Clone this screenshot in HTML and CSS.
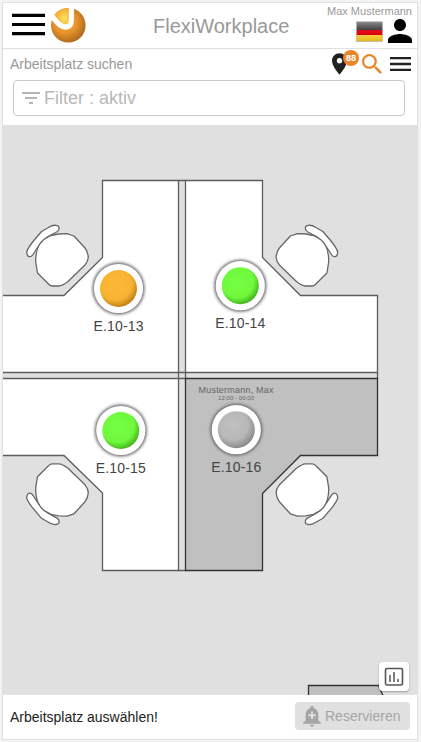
FILE: index.html
```html
<!DOCTYPE html>
<html lang="de">
<head>
<meta charset="utf-8">
<title>FlexiWorkplace</title>
<link rel="stylesheet" href="styles.css">
</head>
<body>
<div class="app">
  <header class="topbar">
    <svg class="menu" width="33" height="24" viewBox="0 0 33 24"><path d="M0 2.400h33M0 11.500h33M0 20.600h33" stroke="#000" stroke-width="3.200"/></svg>
    <svg class="logo" width="36" height="36" viewBox="0 0 36 36">
      <defs>
        <radialGradient id="ball" cx=".42" cy=".4" r=".65"><stop offset="0" stop-color="#f9a63c"/><stop offset=".5" stop-color="#e8932d"/><stop offset="1" stop-color="#a8641c"/></radialGradient>
        <radialGradient id="core" cx=".7" cy=".65" r=".7"><stop offset="0" stop-color="#ffe25a"/><stop offset="1" stop-color="#f3a62c"/></radialGradient>
      </defs>
      <circle cx="18.300" cy="18.300" r="17.300" fill="url(#ball)"/>
      <path d="M1.500 7.500C6 15 11 20 15.500 20Q21.200 20 21.200 13V0" fill="none" stroke="#fff" stroke-width="5.400"/>
      <path d="M4.300 7.500Q10 1.500 18.500 1V13.500Q18.500 17.300 15.500 17.300Q10.500 16.500 4.300 7.500Z" fill="url(#core)"/>
    </svg>
    <h1 class="title">FlexiWorkplace</h1>
    <div class="account">
      <span class="username">Max Mustermann</span>
      <div class="account-icons">
        <svg width="27" height="21" viewBox="0 0 27 21">
          <defs><linearGradient id="flag" x2="0" y2="1"><stop stop-color="#8a8a8a"/><stop offset=".4" stop-color="#444"/><stop offset=".4" stop-color="#d81420"/><stop offset=".5" stop-color="#e50b18"/><stop offset=".68" stop-color="#d40000"/><stop offset=".68" stop-color="#f5cf3c"/><stop offset="1" stop-color="#e3b91b"/></linearGradient></defs>
          <rect x=".5" y=".8" width="26" height="19.600" fill="url(#flag)" stroke="#aaa" stroke-width=".6"/>
        </svg>
        <svg width="24" height="24" viewBox="4 4 16 16"><path d="M12 12c2.210 0 4-1.790 4-4s-1.790-4-4-4-4 1.790-4 4 1.790 4 4 4zm0 2c-2.670 0-8 1.340-8 4v2h16v-2c0-2.660-5.330-4-8-4z"/></svg>
      </div>
    </div>
  </header>
  <section class="search">
    <div class="search-row">
      <span class="search-label">Arbeitsplatz suchen</span>
      <div class="pin">
        <svg width="15" height="22" viewBox="5 2 14 20"><path fill="#222" d="M12 2C8.130 2 5 5.130 5 9c0 5.250 7 13 7 13s7-7.750 7-13c0-3.870-3.130-7-7-7zm0 9.500a2.500 2.500 0 010-5 2.500 2.500 0 010 5z"/></svg>
        <span class="badge">88</span>
      </div>
      <svg class="glass" width="20" height="20" viewBox="3 3 17.500 17.500"><path fill="#e8862c" d="M15.500 14h-.79l-.28-.27A6.471 6.471 0 0016 9.500 6.500 6.500 0 109.500 16c1.610 0 3.090-.59 4.230-1.570l.27.28v.79l5 4.990L20.490 19l-4.990-5zm-6 0C7.010 14 5 11.990 5 9.500S7.010 5 9.500 5 14 7.010 14 9.500 11.990 14 9.500 14z"/></svg>
      <svg class="list" width="21" height="16" viewBox="0 0 21 16"><path d="M0 2.200h21M0 8h21M0 13.900h21" stroke="#222" stroke-width="2.300"/></svg>
    </div>
    <div class="filter">
      <svg width="18" height="12" viewBox="3 6 18 12"><path fill="#b5b5b5" d="M10 18h4v-2h-4v2zM3 6v2h18V6H3zm3 7h12v-2H6v2z"/></svg>
      <span>Filter : aktiv</span>
    </div>
  </section>
  <main class="map">
    <svg class="plan" width="414" height="570" viewBox="3 125 414 570">
      <defs>
        <radialGradient id="orange" cx=".42" cy=".38" r=".65"><stop offset="0" stop-color="#fcb935"/><stop offset=".68" stop-color="#f7b231"/><stop offset="1" stop-color="#b97b12"/></radialGradient>
        <radialGradient id="green" cx=".42" cy=".38" r=".65"><stop offset="0" stop-color="#75ff42"/><stop offset=".68" stop-color="#6ff83c"/><stop offset="1" stop-color="#3fae18"/></radialGradient>
        <radialGradient id="grey" cx=".42" cy=".38" r=".65"><stop offset="0" stop-color="#c0c0c0"/><stop offset=".6" stop-color="#b8b8b8"/><stop offset="1" stop-color="#858585"/></radialGradient>
        <filter id="glow" x="-30%" y="-30%" width="160%" height="160%"><feGaussianBlur stdDeviation="1.500"/></filter>
        <g id="ring"><circle r="26" fill="#6a6670" filter="url(#glow)"/><circle r="24.600" fill="#fff"/></g>
        <g id="chair" fill="#fff" stroke="#666" stroke-width="1.300" stroke-linejoin="round">
          <path d="M43.500 239.500L51 235.500L58.500 234L67 233.700L74 236L85 248Q88 252 88.300 257Q88.300 261 85 265L68 281.500Q62 286 59 286L52 286Q50 286 48 283.500L37.500 273L35.700 262Q35.500 251 39.500 244Q41 241 43.500 239.500Z"/>
          <path d="M26.700 252Q27 256.500 29.500 256.700Q31.500 256.800 33 254.500L40.500 243Q43 239.500 48 236.500L57 231.700Q59.500 230 59 227.500Q58.800 225.500 56 225.300Q52 225 48.500 227.500L41.500 231.500L33 241.500Q27.500 248.500 26.700 252Z"/>
        </g>
      </defs>
      <g fill="#fff" stroke="#5c5c5c" stroke-width="1.300">
        <path d="M0 295.500H64L102.500 257.500V180.500H178.500V372.500H0Z"/>
        <path d="M185.500 180.500H262.500V257.500L300.500 295.500H377.500V372.500H185.500Z"/>
        <path d="M0 378.500H178.500V570.500H102.500V493L64 455.500H0Z"/>
        <path fill="none" d="M178.500 180.500H185.500M178.500 372.500H185.500V378.500M178.500 372.500V378.500H185.500M178.500 570.500H185.500M377.500 372.500V378.500"/>
      </g>
      <g fill="#c0c0c0" stroke="#333" stroke-width="1.300">
        <path d="M185.500 378.500H377.500V455.500H300.500L262.500 493.500V570.500H185.500Z"/>
        <path d="M308.500 700V685.500H378.500L385 700Z"/>
      </g>
      <use href="#chair"/>
      <use href="#chair" transform="translate(364.400 0) scale(-1 1)"/>
      <use href="#chair" transform="translate(0 749.800) scale(1 -1)"/>
      <use href="#chair" transform="translate(364.400 749.800) scale(-1 -1)"/>
      <g class="seat" transform="translate(118.500 288.500)"><use href="#ring"/><circle r="18.500" fill="url(#orange)"/><text y="42.500" textLength="50">E.10-13</text></g>
      <g class="seat" transform="translate(240.300 285.700)"><use href="#ring"/><circle r="18.500" fill="url(#green)"/><text y="42.300" textLength="50">E.10-14</text></g>
      <g class="seat" transform="translate(120.800 430.500)"><use href="#ring"/><circle r="18.500" fill="url(#green)"/><text y="42.300" textLength="50">E.10-15</text></g>
      <g class="seat" transform="translate(236.300 429.700)"><use href="#ring"/><circle r="18.500" fill="url(#grey)"/><text y="42.300" textLength="50">E.10-16</text>
        <text class="person" x="-.3" y="-36.700" textLength="75">Mustermann, Max</text>
        <text class="hours" x="-.3" y="-29.700" textLength="36">12:00 - 00:00</text>
      </g>
    </svg>
    <button class="stats" aria-label="Statistik">
      <svg width="20" height="20" viewBox="0 0 20 20" fill="none" stroke="#555"><rect x="1.500" y="1.500" width="17" height="16.500" rx="1.500" stroke-width="1.600"/><path d="M6 8V15M10 5V15M14 12V15" stroke-width="1.500"/></svg>
    </button>
  </main>
  <footer class="bottom">
    <span>Arbeitsplatz auswählen!</span>
    <button class="reserve" disabled>
      <svg width="18" height="22" viewBox="3.500 1.500 17 20.500"><path fill="#a5a5a5" d="M10 20h4a2 2 0 01-4 0zM18 16v-5.500c0-3.100-1.800-5.600-4.500-6.300V3.500a1.500 1.500 0 00-3 0v.7C7.800 4.900 6 7.400 6 10.500V16l-2.300 2v1h16.600v-1z"/><path d="M12 7.500v7M8.500 11h7" stroke="#e0e0e0" stroke-width="1.800"/></svg>
      <span>Reservieren</span>
    </button>
  </footer>
</div>
</body>
</html>
```
FILE: styles.css
```css
* { box-sizing: border-box; }
body {
  margin: 0;
  padding: 2px 3px 2px 2px;
  height: 742px;
  background: #f3f3f3;
  font-family: "Liberation Sans", Arial, sans-serif;
  font-size: 14px;
  overflow: hidden;
}
svg { display: block; flex: none; }
button { border: 0; padding: 0; font: inherit; }
.app {
  display: flex;
  flex-direction: column;
  width: 416px;
  height: 738px;
  border: 1px solid #e0e0e0;
  background: #fff;
}
.topbar {
  display: flex;
  height: 46px;
  padding: 0 5px 0 9px;
  border-bottom: 1px solid #e0e0e0;
}
.menu { margin-top: 10px; }
.logo { margin: 4px 0 0 5px; }
.title {
  margin: 12px 0 0 67px;
  font-size: 20px;
  line-height: 23px;
  font-weight: 400;
  color: #999;
}
.account {
  display: flex;
  flex-direction: column;
  align-items: flex-end;
  margin-left: auto;
  padding-top: 2px;
}
.username { font-size: 11px; line-height: 13px; color: #999; }
.account-icons { display: flex; align-items: flex-start; gap: 5px; }
.account-icons svg:first-child { margin-top: 3px; }
.account-icons svg:last-child { margin-top: 1px; }
.search { height: 76px; padding: 0 6px 0 7px; }
.search-row { display: flex; align-items: center; height: 29px; margin-bottom: 2px; }
.search-label { color: #999; margin-right: auto; }
.pin { position: relative; }
.badge {
  position: absolute;
  left: 11px;
  top: -3px;
  width: 16px;
  height: 16px;
  border-radius: 50%;
  background: #e8862c;
  color: #fff;
  font-size: 9px;
  line-height: 16px;
  font-weight: 700;
  text-align: center;
}
.glass { margin-left: 15px; }
.list { margin-left: 8px; }
.filter {
  display: flex;
  align-items: center;
  gap: 4px;
  width: 392px;
  height: 36px;
  margin-left: 3px;
  padding-left: 8px;
  border: 1px solid #c8c8c8;
  border-radius: 4px;
  font-size: 18px;
  color: #b8b8b8;
}
.map { position: relative; height: 570px; background: #e0e0e0; }
.seat text { font-size: 14px; fill: #444; text-anchor: middle; }
.seat .person { font-size: 9px; fill: #666; }
.seat .hours { font-size: 6px; fill: #666; }
.stats {
  position: absolute;
  right: 8px;
  bottom: 4px;
  display: grid;
  place-items: center;
  width: 30px;
  height: 29px;
  border-radius: 4px;
  background: #fff;
  box-shadow: 0 1px 2px rgba(0, 0, 0, .3);
}
.bottom {
  display: flex;
  align-items: center;
  justify-content: space-between;
  height: 44px;
  padding: 0 7px;
  color: #222;
}
.reserve {
  display: flex;
  align-items: center;
  gap: 4px;
  width: 115px;
  height: 28px;
  margin-bottom: 2px;
  padding-left: 8px;
  border-radius: 4px;
  background: #e0e0e0;
  color: #a6a6a6;
}
```
